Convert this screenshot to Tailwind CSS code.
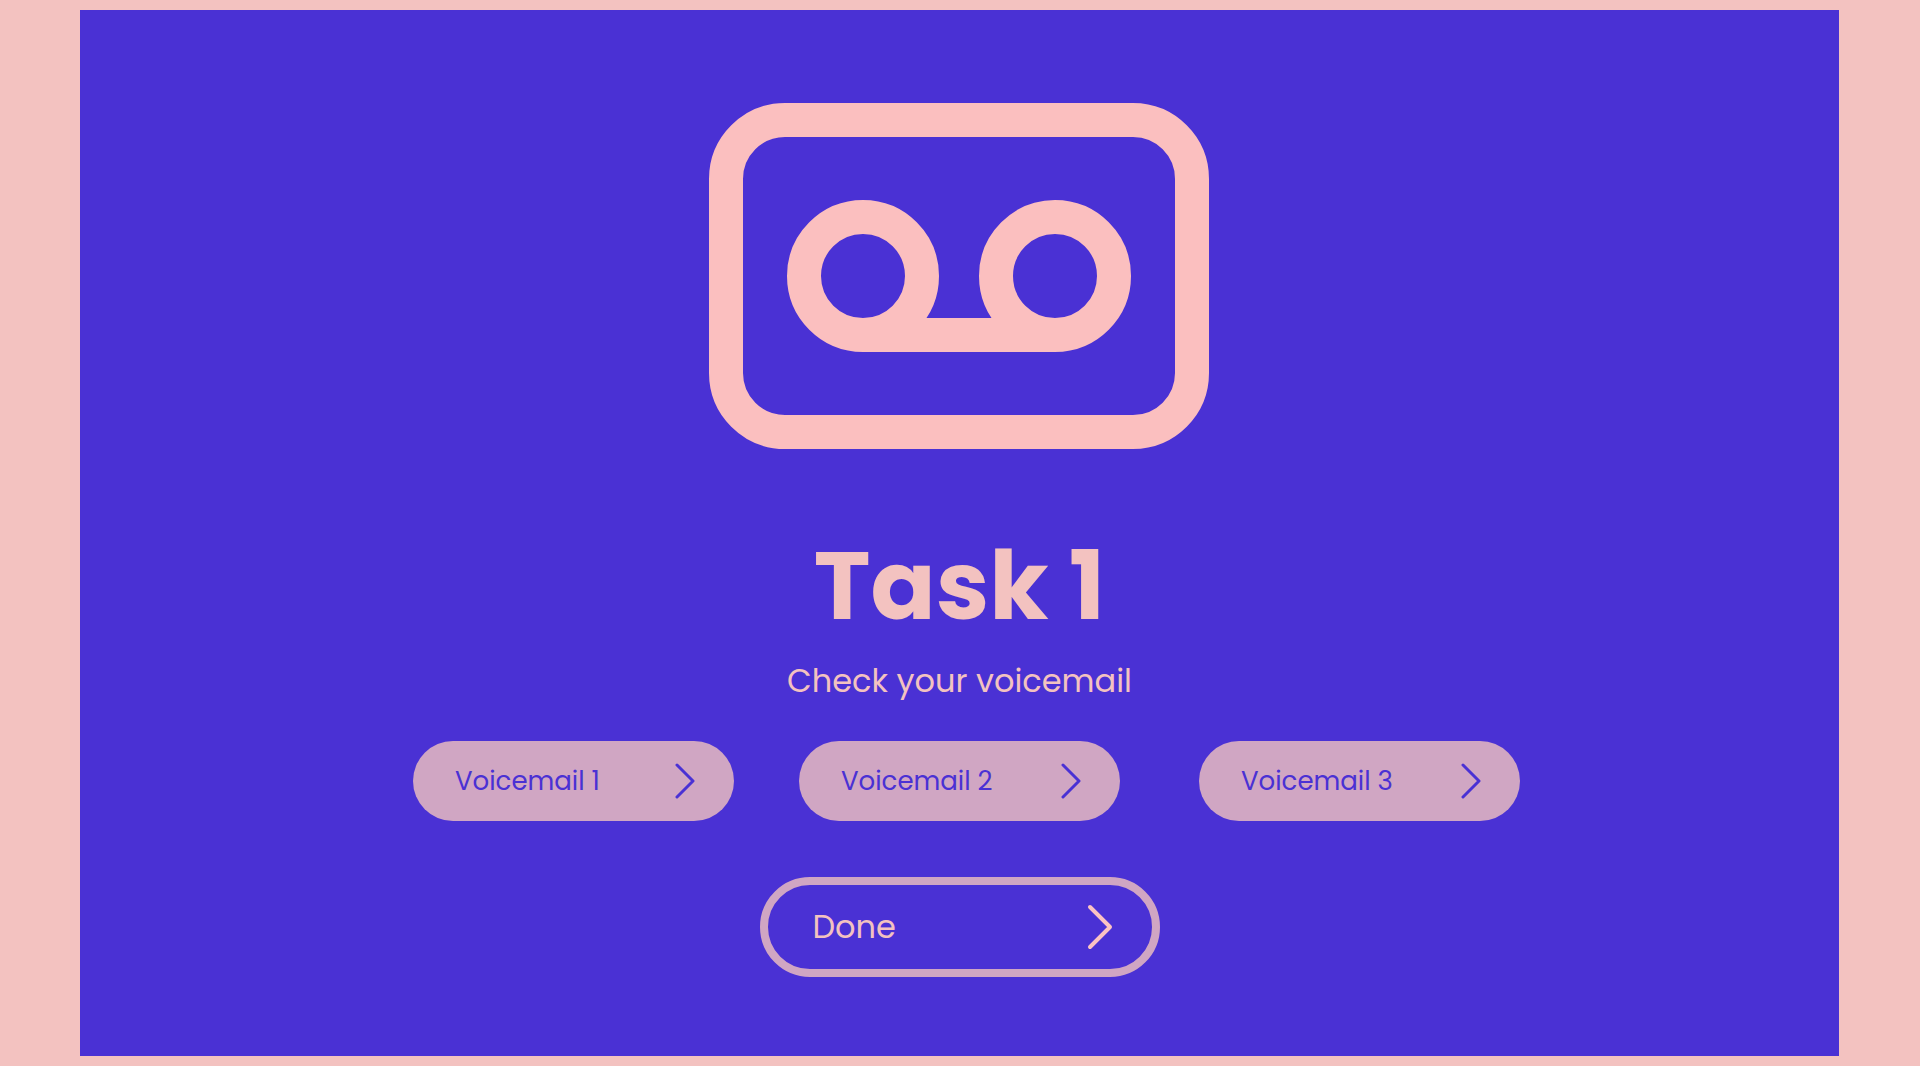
<!DOCTYPE html>
<html lang="en">
<head>
<meta charset="utf-8">
<meta name="viewport" content="width=device-width, initial-scale=1">
<title>Task 1</title>
<script src="https://cdn.jsdelivr.net/npm/@tailwindcss/browser@4"></script>
</head>
<body class="flex min-h-screen bg-[#f3c2c0] py-[10px] pr-[81px] pl-20 font-['Poppins','Inter',sans-serif] text-[#f3c2c0]">
<main class="flex flex-1 flex-col items-center bg-[#4a31d4] pt-[93px] pb-[79px]">
  <svg class="h-[346px] w-[501px]" viewBox="0 0 501 346" fill="none" stroke="#fbbfbf" stroke-width="34" role="img" aria-label="Voicemail">
    <rect x="17" y="17" width="466" height="312" rx="59"/>
    <circle cx="154" cy="173" r="59"/>
    <circle cx="346" cy="173" r="59"/>
    <path d="M154 232H346"/>
  </svg>
  <h1 class="mt-[89px] text-[96px] leading-[96px] font-bold">Task 1</h1>
  <p class="mt-[27px] text-[32px] leading-10">Check your voicemail</p>
  <nav class="mt-10 flex justify-center gap-[65px] pl-[14px] text-[26px] text-[#4a31d4]" aria-label="Voicemails">
    <button class="flex h-20 w-[321px] items-center justify-between rounded-full bg-[#d0a6c3] pr-[39px] pl-[42px]">Voicemail 1
      <svg class="h-9 w-5" viewBox="0 0 20 36" fill="none" stroke="currentColor" stroke-width="3" stroke-linecap="round" stroke-linejoin="round"><path d="M2 2L18 18L2 34"/></svg>
    </button>
    <button class="flex h-20 w-[321px] items-center justify-between rounded-full bg-[#d0a6c3] pr-[39px] pl-[42px]">Voicemail 2
      <svg class="h-9 w-5" viewBox="0 0 20 36" fill="none" stroke="currentColor" stroke-width="3" stroke-linecap="round" stroke-linejoin="round"><path d="M2 2L18 18L2 34"/></svg>
    </button>
    <button class="ml-[14px] flex h-20 w-[321px] items-center justify-between rounded-full bg-[#d0a6c3] pr-[39px] pl-[42px]">Voicemail 3
      <svg class="h-9 w-5" viewBox="0 0 20 36" fill="none" stroke="currentColor" stroke-width="3" stroke-linecap="round" stroke-linejoin="round"><path d="M2 2L18 18L2 34"/></svg>
    </button>
  </nav>
  <button class="mt-14 flex h-[100px] w-[400px] items-center justify-between rounded-full border-8 border-[#d0a6c3] pr-[39px] pl-[45px] text-[32px]">Done
    <svg class="h-[46px] w-[26px]" viewBox="0 0 26 46" fill="none" stroke="#fbc3c3" stroke-width="4" stroke-linecap="round" stroke-linejoin="round"><path d="M3 3L23 23L3 43"/></svg>
  </button>
</main>
</body>
</html>
